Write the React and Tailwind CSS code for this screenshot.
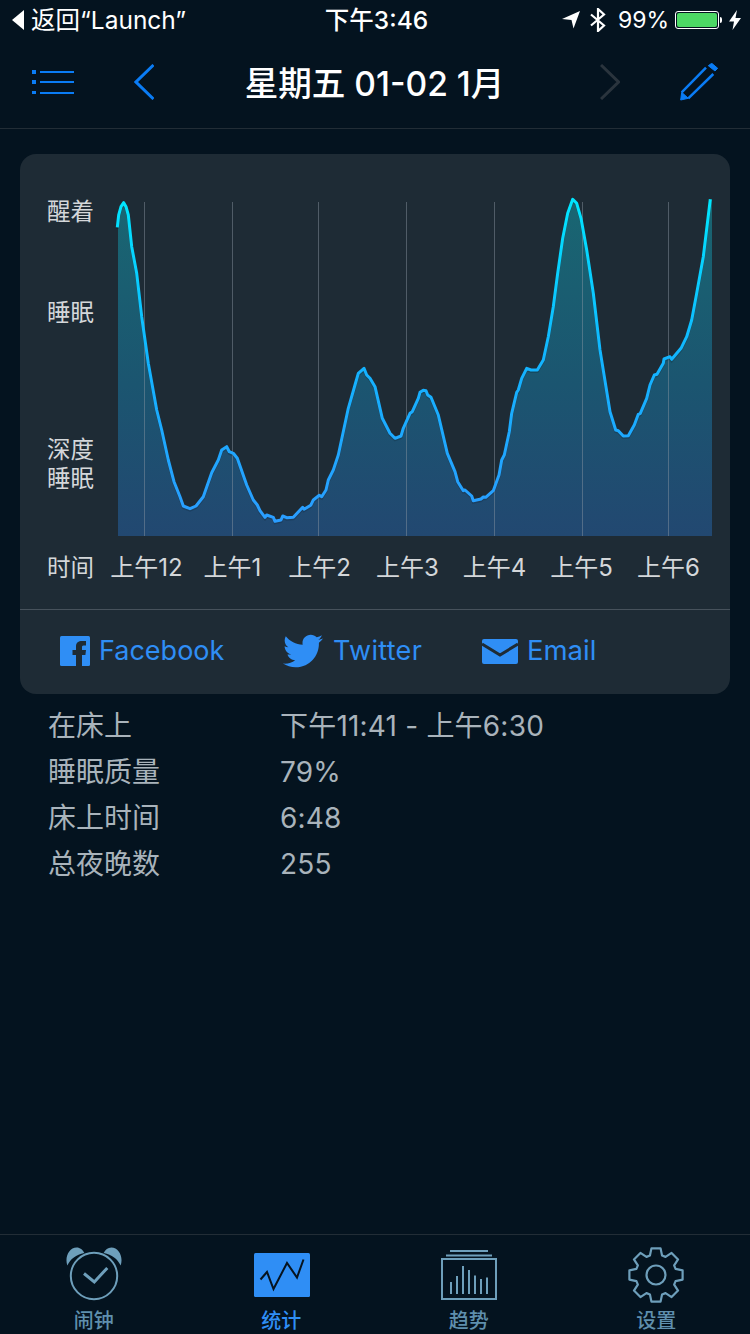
import React from 'react';
import { FaTwitter } from 'react-icons/fa';

const font = { fontFamily: 'Inter, "Noto Sans CJK SC", sans-serif' };

// sleep curve, traced in page coordinates
const curve = [
  [117.3,227.3],[118.7,215],[121,206.7],[123.7,202.7],[126,206.7],[128.3,215],[131.7,246.7],[136.7,273.3],
  [141.7,316.7],[148.3,363.3],[156.7,410],[161.7,430],[168.3,460],[174,481.7],[180,496.7],[183.3,506],
  [190,508.7],[196,506],[203.3,496.7],[211.7,472.7],[218.3,460],[221.7,450],[226.7,446.7],[229.3,451.7],
  [233.3,453.3],[237.3,458.3],[246.7,485],[253.3,500],[257.3,505],[260,510.7],[265,517.3],[266.7,515],
  [273.3,517.3],[275,521.3],[281,520],[282.7,516],[286.7,517.7],[293.3,517.3],[302.7,507.3],[304,509.3],
  [310.7,505.3],[313.3,500],[319.3,495.3],[321.7,496.7],[326,490],[328.3,480],[333.3,470],[338.3,455],
  [348.3,408.3],[355,385],[358.3,373.3],[364,368.3],[366.7,375],[370,378.3],[375,386.7],[382.3,418.3],
  [390,433.3],[395,438.3],[401,436],[403.3,428.3],[410,413.3],[412.3,411.7],[418.3,398.3],[420,392.3],
  [423.3,390.3],[426,390.7],[427.7,395],[431,397.3],[438.3,415],[447.3,453.3],[455,471.7],[457.7,481.7],
  [463.3,490.7],[465,490],[471.7,496],[473.3,500.7],[481,499],[483.3,497],[485.7,497.3],[493.3,490.7],
  [499,475],[501.7,460],[504.3,455],[509.3,431.7],[511.7,413.3],[516.7,392.3],[518.3,390],[521.7,378.3],
  [526.7,368.3],[531,370],[537.3,370],[543.3,360],[548.3,336.7],[553.3,306.7],[557.7,273.3],[562.7,238.3],
  [567.7,213.3],[572.7,199.3],[576.7,203.3],[581,218.3],[586.7,250],[593.3,293.3],[600,350],[610,411.7],
  [615.7,430],[618.3,430.7],[623.3,436],[628.3,435.7],[634.3,425],[638.3,414.3],[640.3,413.3],[646.7,398.3],
  [650,385],[654.3,375],[657,374.3],[663.3,363.3],[664,359],[670,356.7],[671.7,359.3],[681,348.3],
  [686.7,336.7],[691.7,320],[696.7,293.3],[703.3,256.7],[710.3,199.3],
];
const linePoints = curve.map((p) => p.join(',')).join(' ');
const fillPoints = `118,536 118,227.3 ${curve.slice(1).map((p) => p.join(',')).join(' ')} 712,199.3 712,536`;
const gridLines = [144.5, 232.5, 318.5, 406.5, 494.5, 582.5, 668.5];
const hours = ['上午12', '上午1', '上午2', '上午3', '上午4', '上午5', '上午6'];

const stats = [
  ['在床上', '下午11:41 - 上午6:30'],
  ['睡眠质量', '79%'],
  ['床上时间', '6:48'],
  ['总夜晚数', '255'],
];

// eight toothed gear outline, centred on 0,0
const gearPath = () => {
  const pts = [];
  for (let i = 0; i < 8; i++) {
    const a = (i * Math.PI) / 4 - Math.PI / 2;
    const at = (r, d) => `${(r * Math.cos(a + d)).toFixed(2)},${(r * Math.sin(a + d)).toFixed(2)}`;
    pts.push(at(20.5, -0.3), at(27, -0.17), at(27, 0.17), at(20.5, 0.3));
  }
  return pts.join(' ');
};

const StatusBar = () => (
  <div className="h-[40px] flex items-center justify-between pl-[12px] pr-[9px] text-white text-[24.5px]">
    <div className="flex items-center w-[230px]">
      <svg width="12" height="20" viewBox="0 0 12 20"><path d="M12 0v20L0 10z" fill="#fff" /></svg>
      <span className="ml-[7px] leading-none whitespace-nowrap">返回“Launch”</span>
    </div>
    <span className="font-medium leading-none whitespace-nowrap">下午3:46</span>
    <div className="flex items-center w-[230px] justify-end">
      <svg width="18" height="18" viewBox="0 0 18 18"><path d="M18 0 11.5 17.5 9.5 9 0 8z" fill="#fff" /></svg>
      <svg className="ml-[9px]" width="18" height="24" viewBox="0 0 18 24" fill="none" stroke="#fff" strokeWidth="2.2"><path d="M2 6.5 15 17.5 9 23V1l6 5.5L2 17.5" /></svg>
      <span className="ml-[11px] leading-none text-[23px]">99%</span>
      <div className="ml-[6px] w-[44px] h-[18px] rounded-[3px] border border-white p-[1px]">
        <div className="h-full w-full rounded-[2px] bg-[#4cd964]" />
      </div>
      <div className="ml-[1px] w-[2px] h-[6px] bg-white rounded-r-sm" />
      <svg className="ml-[7px]" width="12" height="20" viewBox="0 0 12 20"><path d="M8 0 0 11.5h5L3.5 20 12 8H6.5z" fill="#fff" /></svg>
    </div>
  </div>
);

const NavBar = () => (
  <div className="h-[89px] flex items-center px-[32px] border-b border-[#222d36] pb-[4px]">
    <svg width="42" height="24" viewBox="0 0 42 24" fill="#0a7cf5">
      <rect x="0" y="0" width="4" height="4" /><rect x="0" y="10" width="4" height="4" /><rect x="0" y="21" width="4" height="3" />
      <rect x="8" y="1" width="34" height="2" /><rect x="8" y="11" width="34" height="2" /><rect x="8" y="22" width="34" height="2" />
    </svg>
    <svg className="ml-[60px]" width="20" height="36" viewBox="0 0 20 36" fill="none" stroke="#0a7cf5" strokeWidth="3"><path d="M19.5 1 2 18l17.5 17" /></svg>
    <div className="flex-1 text-center pr-[5px] mt-[3px] text-white text-[33.6px] leading-[40px] font-medium whitespace-nowrap">星期五 01-02 1月</div>
    <svg width="20" height="36" viewBox="0 0 20 36" fill="none" stroke="#2a343d" strokeWidth="3"><path d="M1 1l17.5 17L1 35" /></svg>
    <svg className="ml-[60px]" width="38" height="38" viewBox="0 0 38 38" fill="none" stroke="#0a7cf5">
      <path d="M26 4.700 1.700 29.300M33.300 11 8.300 35.300" strokeWidth="2.500" />
      <path d="M1.700 29.300.7 37l7.600-1.700z" fill="#0a7cf5" strokeWidth="1" />
      <path d="M28.300 2.700 31.700.3l6 5L35 8z" fill="#0a7cf5" strokeWidth="1" strokeLinejoin="round" />
    </svg>
  </div>
);

const Chart = () => (
  <svg width="594" height="341" viewBox="118 195 594 341" className="overflow-visible">
    <defs>
      <linearGradient id="area" gradientUnits="userSpaceOnUse" x1="0" y1="200" x2="0" y2="536">
        <stop offset="0" stopColor="#196672" />
        <stop offset="0.55" stopColor="#1b5570" />
        <stop offset="1" stopColor="#224871" />
      </linearGradient>
      <linearGradient id="line" gradientUnits="userSpaceOnUse" x1="0" y1="200" x2="0" y2="520">
        <stop offset="0" stopColor="#00e6ff" />
        <stop offset="0.5" stopColor="#12b4ff" />
        <stop offset="1" stopColor="#2a9dff" />
      </linearGradient>
    </defs>
    <polygon points={fillPoints} fill="url(#area)" />
    {gridLines.map((x) => (
      <line key={x} x1={x} x2={x} y1="202" y2="536" stroke="#8d99a5" strokeOpacity="0.45" />
    ))}
    <polyline points={linePoints} fill="none" stroke="#000" strokeOpacity="0.15" strokeWidth="3" transform="translate(0 1.5)" />
    <polyline points={linePoints} fill="none" stroke="url(#line)" strokeWidth="3" strokeLinejoin="round" />
  </svg>
);

const ChartCard = () => (
  <div className="h-[540px] rounded-[16px] bg-[#1e2b35] flex flex-col">
    <div className="flex pt-[41px]">
      <div className="w-[98px] pl-[27px] text-[23.5px] text-[#d4d7da] leading-[30px]">
        <div className="mt-[2px]">醒着</div>
        <div className="mt-[71px]">睡眠</div>
        <div className="mt-[107px] leading-[29px]">深度<br />睡眠</div>
      </div>
      <Chart />
    </div>
    <div className="flex items-center pl-[27px] mt-[17px] h-[30px] text-[23.5px] text-[#d4d7da] whitespace-nowrap">
      <div className="w-[56px]">时间</div>
      <div className="grid grid-cols-[87px_85px_89px_87px_87px_87px_87px] text-center text-[24px]">
        {hours.map((h) => <div key={h}>{h}</div>)}
      </div>
    </div>
    <div className="mt-[26px] flex-1 border-t border-[#47525c] flex items-center text-[#2f8ef5] text-[27px] pl-[40px] pb-[2px]">
      <svg width="30" height="30" viewBox="0 0 30 30">
        <rect width="30" height="30" rx="1.500" fill="#2f8ef5" />
        <path d="M16 30V19h-3.500v-5H16v-3.500C16 6.500 18.500 5 22 5h4v4.500h-2.500c-1.500 0-1.500 1-1.500 2V14h4l-.6 5H22v11z" fill="#1e2b35" />
      </svg>
      <span className="ml-[9px] w-[124px]">Facebook</span>
      <FaTwitter className="ml-[60px] w-[40px] h-[40px]" />
      <span className="ml-[10px] w-[88px] tracking-[0.3px]">Twitter</span>
      <svg className="ml-[61px]" width="36" height="25" viewBox="0 0 36 25">
        <rect width="36" height="25" rx="2" fill="#2f8ef5" />
        <path d="M0 5l18 11L36 5" fill="none" stroke="#1e2b35" strokeWidth="3" />
      </svg>
      <span className="ml-[9px] text-[27.5px]">Email</span>
    </div>
  </div>
);

const TabItem = ({ label, active, children }) => (
  <div className="flex flex-col items-center">
    <div className="h-[60px] w-full flex items-center justify-center">{children}</div>
    <div className={`mt-[2px] text-[20px] leading-[28px] font-medium ${active ? 'text-[#2f8ef5]' : 'text-[#5f8fad]'}`}>{label}</div>
  </div>
);

const TabBar = () => (
  <div className="h-[100px] border-t border-[#222d36] grid grid-cols-4 pt-[10px]">
    <TabItem label="闹钟">
      <svg width="56" height="56" viewBox="0 0 56 56" fill="none">
        <circle cx="28" cy="29" r="23.200" stroke="#6e9fbb" strokeWidth="2" />
        <path d="M1.300 18.500C-1.500 10 3 .8 10.700 .6 14 .6 16.800 3 18.300 6 10 7.500 4.500 12 1.300 18.500z" fill="#6e9fbb" />
        <path d="M54.700 18.500C57.500 10 53 .8 45.300 .6 42 .6 39.200 3 37.700 6 46 7.500 51.500 12 54.700 18.500z" fill="#6e9fbb" />
        <path d="M18 26.500l10.300 8.400 13-14" stroke="#6e9fbb" strokeWidth="3" />
      </svg>
    </TabItem>
    <TabItem label="统计" active>
      <svg className="ml-[1px]" width="56" height="44" viewBox="0 0 56 44">
        <rect width="56" height="44" rx="1.500" fill="#2f8ef5" />
        <path d="M6.500 26.500 13 19l6.500 17L33 10l10 14.500L49.500 6.500" fill="none" stroke="#06131f" strokeWidth="2" />
      </svg>
    </TabItem>
    <TabItem label="趋势">
      <svg width="56" height="50" viewBox="0 0 56 50" fill="none" stroke="#6e9fbb">
        <path d="M9 1h38M5 5.500h46" strokeWidth="2" />
        <rect x="1" y="9" width="54" height="40" strokeWidth="2" />
        <path d="M10 44V32M16 44V26M22 44V16M28 44V20M34 44V25.500M40 44V29M46 44V27.500" strokeWidth="2" />
      </svg>
    </TabItem>
    <TabItem label="设置">
      <svg width="58" height="58" viewBox="-29 -29 58 58" fill="none" stroke="#6e9fbb" strokeWidth="2.200" strokeLinejoin="round">
        <polygon points={gearPath()} />
        <circle r="9.500" />
      </svg>
    </TabItem>
  </div>
);

export default function App() {
  return (
    <div className="w-[750px] h-[1334px] bg-[#04131f] flex flex-col overflow-hidden" style={font}>
      <StatusBar />
      <NavBar />
      <div className="flex-1 px-[20px] pt-[25px]">
        <ChartCard />
        <div className="mt-[9px] pl-[28px] text-[28px] text-[#a9b3bb]">
          {stats.map(([k, v]) => (
            <div key={k} className="flex items-center h-[46px]">
              <div className="w-[232px]">{k}</div>
              <div className="tracking-[0.2px]">{v}</div>
            </div>
          ))}
        </div>
      </div>
      <TabBar />
    </div>
  );
}
